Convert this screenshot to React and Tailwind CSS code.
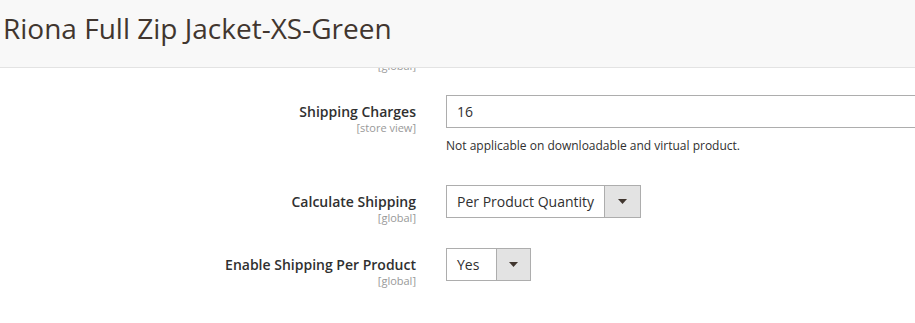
import React from "react";

function Arrow() {
  return (
    <svg width="9" height="5" viewBox="0 0 9 5" className="block">
      <path d="M0 0 L9 0 L4.5 5 Z" fill="#41362f" />
    </svg>
  );
}

function Label({ title, scope }) {
  return (
    <div className="w-[416px] shrink-0 text-right pt-[8px]">
      <div className="text-[14px] leading-[18px] font-semibold text-[#303030]">{title}</div>
      <div className="text-[11px] leading-[13px] text-[#999999]">{scope}</div>
    </div>
  );
}

function Select({ value, width, arrowWidth }) {
  return (
    <div className="flex h-[33px] border border-[#adadad] bg-white" style={{ width }}>
      <div className="flex-1 flex items-center pl-[10px] text-[14px] text-[#303030]">{value}</div>
      <div className="flex items-center justify-center border-l border-[#adadad] bg-[#e3e3e3]" style={{ width: arrowWidth }}>
        <Arrow />
      </div>
    </div>
  );
}

export default function App() {
  return (
    <div className="w-[915px] h-[323px] overflow-hidden bg-white" style={{ fontFamily: '"Open Sans", "Liberation Sans", sans-serif' }}>
      <header className="h-[68px] bg-[#f8f8f8] border-b border-[#e3e3e3] pl-[3px] pt-[11px]">
        <h1 className="text-[28px] leading-[34px] font-normal text-[#41362f] whitespace-nowrap">Riona Full Zip Jacket-XS-Green</h1>
      </header>

      <main>
        <div className="w-[416px] h-[5px] overflow-hidden flex items-end justify-end">
          <span className="text-[11px] leading-[14px] text-[#999999]">[global]</span>
        </div>

        <div className="flex mt-[22px]">
          <Label title="Shipping Charges" scope="[store view]" />
          <div className="ml-[30px] flex-1">
            <div className="w-[520px] h-[33px] border border-[#adadad] bg-white flex items-center pl-[10px] text-[14px] text-[#303030]">16</div>
            <p className="text-[12px] leading-[16px] text-[#303030] mt-[10px]">Not applicable on downloadable and virtual product.</p>
          </div>
        </div>

        <div className="flex mt-[31px]">
          <Label title="Calculate Shipping" scope="[global]" />
          <div className="ml-[30px]">
            <Select value="Per Product Quantity" width="195px" arrowWidth="36px" />
          </div>
        </div>

        <div className="flex mt-[24px]">
          <Label title="Enable Shipping Per Product" scope="[global]" />
          <div className="ml-[30px]">
            <Select value="Yes" width="85px" arrowWidth="34px" />
          </div>
        </div>
      </main>
    </div>
  );
}
